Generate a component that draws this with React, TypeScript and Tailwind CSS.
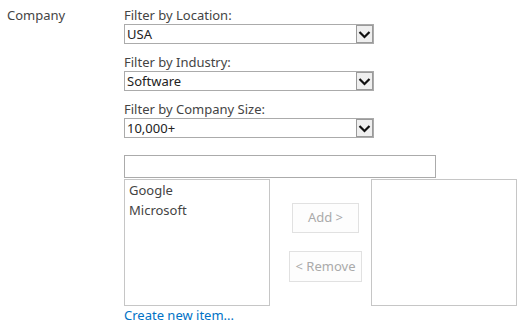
import React from "react";

const font = { fontFamily: '"Noto Sans", "Open Sans", sans-serif' };

function Chevron() {
  return (
    <svg width="15" height="15" viewBox="0 0 15 15">
      <path d="M2.5 5 L7.5 10 L12.5 5" fill="none" stroke="#111" strokeWidth="2.2" />
    </svg>
  );
}

function FilterSelect({ label, value }: { label: string; value: string }) {
  return (
    <div className="mb-[9px] flex flex-col">
      <div className="h-[18px] leading-[18px]">{label}</div>
      <div className="flex h-[20px] w-[250px] items-stretch border border-[#ababab] bg-white">
        <div className="flex-1 pl-[2px] leading-[18px] text-[#222]">{value}</div>
        <div className="flex w-[17px] items-center justify-center border border-[#9a9a9a] bg-[#efefef]">
          <Chevron />
        </div>
      </div>
    </div>
  );
}

function ListBox({ items }: { items: string[] }) {
  return (
    <div className="h-[127px] w-[146px] border border-[#c6c6c6] px-[4px]">
      {items.map((item) => (
        <div key={item} className="leading-[20px]">
          {item}
        </div>
      ))}
    </div>
  );
}

export default function App() {
  return (
    <div className="flex bg-white pt-[6px] text-[13px] text-[#444]" style={font}>
      <div className="w-[124px] pl-[7px] leading-[18px]">Company</div>
      <div className="flex flex-col">
        <FilterSelect label="Filter by Location:" value="USA" />
        <FilterSelect label="Filter by Industry:" value="Software" />
        <FilterSelect label="Filter by Company Size:" value="10,000+" />
        <input
          className="mt-[8px] h-[23px] w-[312px] border border-[#ababab] outline-none"
          type="text"
        />
        <div className="mt-[1px] flex">
          <ListBox items={["Google", "Microsoft"]} />
          <div className="flex w-[101px] flex-col items-center gap-[18px] pl-[10px] pt-[24px]">
            <button className="h-[30px] w-[67px] border border-[#e1e1e1] bg-[#fdfdfd] text-[#aaa]">
              Add &gt;
            </button>
            <button className="h-[31px] w-[73px] border border-[#e1e1e1] bg-[#fdfdfd] text-[#aaa]">
              &lt; Remove
            </button>
          </div>
          <ListBox items={[]} />
        </div>
        <a className="leading-[18px] text-[#0072c6]" href="#">
          Create new item...
        </a>
      </div>
    </div>
  );
}
